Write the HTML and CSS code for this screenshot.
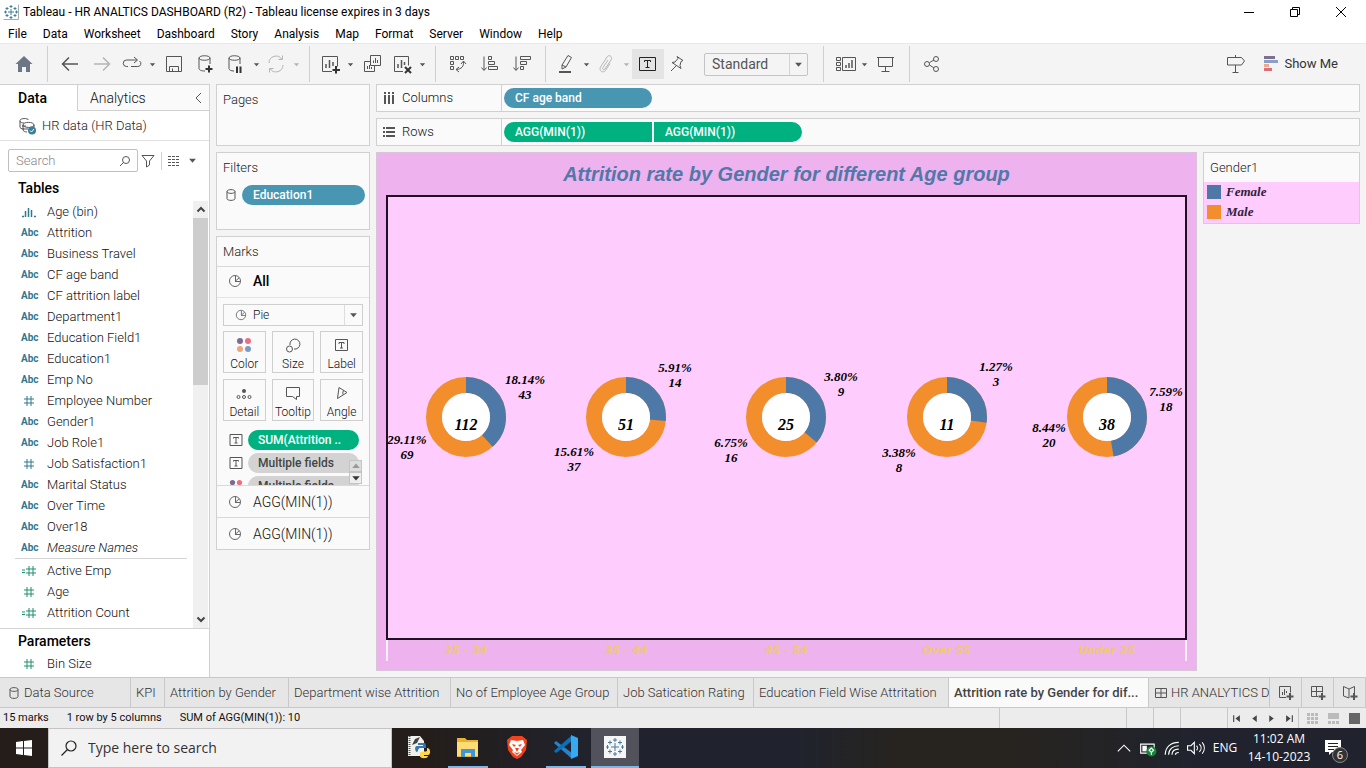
FILE: index.html
```html
<!DOCTYPE html>
<html lang="en">
<head>
<meta charset="utf-8">
<title>Tableau - HR ANALTICS DASHBOARD (R2)</title>
<link rel="stylesheet" href="styles.css">
</head>
<body>
<svg class="defs" aria-hidden="true">
  <symbol id="hash" viewBox="0 0 12 12"><path d="M4 1v10M8 1v10M1 4h10M1 8h10" fill="none" stroke="currentColor"/></symbol>
  <symbol id="calc" viewBox="0 0 16 12"><path d="M8 1v10M12 1v10M5 4h10M5 8h10M1 5h3M1 7.500h3" fill="none" stroke="currentColor"/></symbol>
  <symbol id="bin" viewBox="0 0 16 12"><path d="M4.500 5v6M7.500 2v9M10.500 4v7M1 10.500h2M13 10.500h2" fill="none" stroke="currentColor" stroke-width="1.500"/></symbol>
  <symbol id="pie" viewBox="0 0 14 14"><path d="M7 1.500a5.500 5.500 0 1 0 0 11 5.500 5.500 0 0 0 0-11zM7.500 2v5l3.500-3M7 7.500h5" fill="none" stroke="#666"/></symbol>
  <symbol id="tbox" viewBox="0 0 14 14"><path d="M1 1.500h12v11H1zM4.500 5.500V4.500h5v1M7 4.500v5.500M5.500 10h3" fill="none" stroke="#555"/></symbol>
  <symbol id="caret" viewBox="0 0 8 8"><path d="M1 2.500h6L4 6z" fill="currentColor"/></symbol>
  <symbol id="db" viewBox="0 0 12 14"><path d="M2 3.500v7c0 2.500 8 2.500 8 0v-7M2 3.500c0-2.500 8-2.500 8 0s-8 2.500-8 0z" fill="none" stroke="#555"/></symbol>
  <symbol id="colors" viewBox="0 0 16 16"><circle cx="4" cy="4" r="3" fill="#7b6a91"/><circle cx="12" cy="4" r="3" fill="#ea6f80"/><circle cx="4" cy="12" r="3" fill="#efa47d"/><circle cx="12" cy="12" r="3" fill="#7a9cc0"/></symbol>
</svg>

<header class="titlebar">
  <svg class="app-icon" viewBox="0 0 16 16"><path d="M.5 15.500h15V.5" fill="none" stroke="#aaa"/><path d="M8 5v6M5 8h6M8 1v3M6.500 2.500h3M8 12v3M6.500 13.500h3M1 8h3M2.500 6.500v3M12 8h3M13.500 6.500v3M4 3v3M2.500 4.500h3M12 3v3M10.500 4.500h3M4 10v3M2.500 11.500h3M12 10v3M10.500 11.500h3" stroke="#3d7e9d" fill="none"/></svg>
  <h1>Tableau - HR ANALTICS DASHBOARD (R2) - Tableau license expires in 3 days</h1>
  <button class="win" aria-label="Minimize"><svg viewBox="0 0 12 12"><path d="M1 6.500h10"/></svg></button>
  <button class="win" aria-label="Restore"><svg viewBox="0 0 12 12"><path d="M1.500 3.500h7v7h-7zM3.500 3.500v-2h7v7h-2"/></svg></button>
  <button class="win" aria-label="Close"><svg viewBox="0 0 12 12"><path d="M1 1l10 10M11 1L1 11"/></svg></button>
</header>

<nav class="menubar">
  <button>File</button><button>Data</button><button>Worksheet</button><button>Dashboard</button><button>Story</button><button>Analysis</button><button>Map</button><button>Format</button><button>Server</button><button>Window</button><button>Help</button>
</nav>

<div class="toolbar">
  <button class="tool" aria-label="Start page"><svg viewBox="0 0 20 20"><path d="M10 2L1.500 10H4v8h4v-5h4v5h4v-8h2.500z" fill="#6b7785"/></svg></button>
  <span class="sep"></span>
  <button class="tool" aria-label="Undo"><svg viewBox="0 0 20 20"><path d="M18 10H3M9 3.500L2.500 10 9 16.500" stroke-width="1.500"/></svg></button>
  <button class="tool faint" aria-label="Redo"><svg viewBox="0 0 20 20"><path d="M2 10h15M11 3.500l6.500 6.500-6.500 6.500" stroke-width="1.500"/></svg></button>
  <button class="tool narrow" aria-label="Replay"><svg viewBox="0 0 20 20"><path d="M6 12.500H4.500a3 3 0 0 1 0-6.500H15M12 3l3.500 3L12 9M9 12.500h6.500a3 3 0 0 0 2-5.500"/></svg></button>
  <button class="drop" aria-label="Replay options"><svg><use href="#caret"/></svg></button>
  <button class="tool" aria-label="Save"><svg viewBox="0 0 20 20"><path d="M2.500 2.500h15v15h-15zM5.500 17.500v-5h9v5M8.500 17.500v-3"/></svg></button>
  <button class="tool mid" aria-label="New data source"><svg viewBox="0 0 20 20"><path d="M10 17c-4 0-6-1-6-2.500V4c0-3 11-3 11 0v6M4 4c0 3 11 3 11 0"/><path d="M14 11.500v7M10.500 15h7" stroke="#333" stroke-width="2"/></svg></button>
  <button class="tool mid" aria-label="Pause updates"><svg viewBox="0 0 20 20"><path d="M9 17c-3 0-5-1-5-2.500V4c0-3 11-3 11 0v6M4 4c0 3 11 3 11 0"/><path d="M12 12.500v6.500M15.500 12.500v6.500" stroke="#333" stroke-width="2"/></svg></button>
  <button class="drop" aria-label="Update options"><svg><use href="#caret"/></svg></button>
  <button class="tool narrow faint" aria-label="Refresh"><svg viewBox="0 0 20 20"><path d="M3 9a7 7 0 0 1 13-3.500M17 11a7 7 0 0 1-13 3.500M16.500 1.500v4h-4M3.500 18.500v-4h4"/></svg></button>
  <button class="drop faint" aria-label="Refresh options"><svg><use href="#caret"/></svg></button>
  <span class="sep"></span>
  <button class="tool narrow" aria-label="New worksheet"><svg viewBox="0 0 20 20"><path d="M12 17.500H2.500v-15h15v10"/><path d="M6 14v-4M9.500 14V6M13 12V8" stroke-width="1.500"/><path d="M16 12v7.500M12.500 16h7.500" stroke="#333" stroke-width="2"/></svg></button>
  <button class="drop" aria-label="New options"><svg><use href="#caret"/></svg></button>
  <button class="tool" aria-label="Duplicate"><svg viewBox="0 0 20 20"><path d="M8.500 1.500h10v10h-10zM8 7.500H2.500v10h10V12M11.500 9V6.500M13.500 9V4M15.500 9V6M5.500 15v-3M7.500 15v-4M9.500 15v-2"/></svg></button>
  <button class="tool narrow" aria-label="Clear sheet"><svg viewBox="0 0 20 20"><path d="M11 17.500H2.500v-15h14v9"/><path d="M6 14v-4M9.500 14V6M12.500 11V8" stroke-width="1.500"/><path d="M13 13l6 6M19 13l-6 6" stroke="#333" stroke-width="2"/></svg></button>
  <button class="drop" aria-label="Clear options"><svg><use href="#caret"/></svg></button>
  <span class="sep"></span>
  <button class="tool" aria-label="Swap rows and columns"><svg viewBox="0 0 20 20"><path d="M2.500 2.500h3v3h-3zM7.500 2.500h3v3h-3zM12.500 2.500h3v3h-3zM2.500 7.500h3v3h-3zM2.500 12.500h3v3h-3zM15.500 7.500c.5 5-2 7.500-7 8M13 10l2.500-3 2.500 3M11 13l-3 2.500 3 2.500"/></svg></button>
  <button class="tool" aria-label="Sort ascending"><svg viewBox="0 0 20 20"><path d="M4 2.500V16M1.500 13.500L4 16.500l2.500-3M8.500 2.500h3v3h-3zM8.500 7.500h6v3h-6zM8.500 12.500h9v3h-9z"/></svg></button>
  <button class="tool" aria-label="Sort descending"><svg viewBox="0 0 20 20"><path d="M4 2.500V16M1.500 13.500L4 16.500l2.500-3M8.500 2.500h10v3h-10zM8.500 7.500h6v3h-6zM8.500 12.500h3v3h-3z"/></svg></button>
  <span class="sep"></span>
  <button class="tool narrow" aria-label="Highlight"><svg viewBox="0 0 20 20"><path d="M6 11l6-9.500 3.500 2L10 13l-4 2zM6 11l4 2"/><path d="M3 18h12" stroke-width="2"/></svg></button>
  <button class="drop" aria-label="Highlight options"><svg><use href="#caret"/></svg></button>
  <button class="tool narrow faint" aria-label="Group"><svg viewBox="0 0 20 20"><path d="M12 6l-5 7.500c-1 2 1 3 2 1.500l6-9c2-3.500-2-6-4-3l-6.500 10c-2 4 3 6.500 5 3.500l4.500-7"/></svg></button>
  <button class="drop faint" aria-label="Group options"><svg><use href="#caret"/></svg></button>
  <button class="tool pressed" aria-label="Show mark labels"><svg viewBox="0 0 20 20"><path d="M1.500 3.500h16v13h-16zM6.500 8V6.500h6V8M9.500 6.500V13M7.500 13.500h4"/></svg></button>
  <button class="tool narrow" aria-label="Fix axes"><svg viewBox="0 0 20 20"><path d="M9 2.500l6 4-2 1-1 4 1 3-9-6 3-.5 3-3.500zM8 12l-5 5"/></svg></button>
  <span class="fit"><select aria-label="Fit"><option>Standard</option></select><svg><use href="#caret"/></svg></span>
  <span class="sep"></span>
  <button class="tool narrow cardbtn" aria-label="Show cards"><svg viewBox="0 0 20 20"><path d="M.5 3.500h4v3h-4zM.5 8.500h4v3h-4zM.5 13.500h4v3h-4zM6.500 3.500h13v13h-13z"/><path d="M10 14v-3M13 14V9M16 14V6" stroke-width="1.500"/></svg></button>
  <button class="drop" aria-label="Card options"><svg><use href="#caret"/></svg></button>
  <button class="tool" aria-label="Presentation mode"><svg viewBox="0 0 20 20"><path d="M1 3.500h17M2.500 3.500v9h14v-9M9.500 12.500v5M5.500 17.500h8"/></svg></button>
  <span class="sep"></span>
  <button class="tool" aria-label="Share"><svg viewBox="0 0 20 20"><path d="M7.500 8.500L12 6M7.500 11l4.500 3"/><circle cx="5" cy="10" r="2.500"/><circle cx="14" cy="5" r="2.500"/><circle cx="14" cy="15" r="2.500"/></svg></button>
  <button class="tool guide" aria-label="Guide"><svg viewBox="0 0 20 20"><path d="M9.500 1v2M9.500 11v7M6.500 18.500h6M1.500 3.500h14l3 3.500-3 4h-14z"/></svg></button>
  <button class="showme"><svg viewBox="0 0 16 16"><path d="M0 0h11v3H0z" fill="#806f95"/><path d="M0 4h14v3H0z" fill="#86a1c5"/><path d="M0 8h5v3H0z" fill="#f0a98c"/><path d="M0 12h8v3H0z" fill="#dd6d7b"/></svg>Show Me</button>
</div>

<main class="workspace">
  <aside class="data-pane">
    <div class="pane-tabs"><button class="on">Data</button><button class="off">Analytics</button><button class="collapse" aria-label="Collapse"><svg viewBox="0 0 10 12"><path d="M7 1L2 6l5 5" fill="none" stroke="#555"/></svg></button></div>
    <a class="source" href="#"><svg viewBox="0 0 18 18"><path d="M5 12c-3 0-4-1-4-2V3.500C1 1 9 1 9.500 3M1 4c0 1.500 2 2 4 2M4 8c0-3.500 11-3.500 11 0s-11 3-11 0v5c0 1 2 2 4 2M15 8v2M3 9h4M4 12h5" fill="none" stroke="#555"/><circle cx="13" cy="13.500" r="4" fill="#387f9e"/><path d="M11 13.500l1.500 1.500 2.500-3" fill="none" stroke="#fff"/></svg>HR data (HR Data)</a>
    <div class="search-row">
      <label class="search"><input type="text" placeholder="Search" aria-label="Search fields"><svg viewBox="0 0 12 12"><circle cx="7" cy="5" r="3.500" fill="none" stroke="#555"/><path d="M4.500 7.500L1 11" stroke="#555"/></svg></label>
      <button class="filter" aria-label="Filter fields"><svg viewBox="0 0 14 14"><path d="M1 1.500h12L8.500 7v4l-3 2V7z" fill="none" stroke="#555"/></svg></button>
      <button class="viewas" aria-label="View as"><svg viewBox="0 0 12 12"><path d="M0 1.500h12M0 4.500h12M0 7.500h12M0 10.500h12" stroke="#555" stroke-dasharray="3 1"/></svg><svg class="car"><use href="#caret"/></svg></button>
    </div>
    <h2>Tables</h2>
    <div class="fields-wrap">
      <div class="fields">
        <ul>
          <li><svg><use href="#bin"/></svg>Age (bin)</li>
          <li><b>Abc</b>Attrition</li>
          <li><b>Abc</b>Business Travel</li>
          <li><b>Abc</b>CF age band</li>
          <li><b>Abc</b>CF attrition label</li>
          <li><b>Abc</b>Department1</li>
          <li><b>Abc</b>Education Field1</li>
          <li><b>Abc</b>Education1</li>
          <li><b>Abc</b>Emp No</li>
          <li><svg><use href="#hash"/></svg>Employee Number</li>
          <li><b>Abc</b>Gender1</li>
          <li><b>Abc</b>Job Role1</li>
          <li><svg><use href="#hash"/></svg>Job Satisfaction1</li>
          <li><b>Abc</b>Marital Status</li>
          <li><b>Abc</b>Over Time</li>
          <li><b>Abc</b>Over18</li>
          <li><b>Abc</b><i>Measure Names</i></li>
        </ul>
        <ul class="measures">
          <li><svg><use href="#calc"/></svg>Active Emp</li>
          <li><svg><use href="#hash"/></svg>Age</li>
          <li><svg><use href="#calc"/></svg>Attrition Count</li>
        </ul>
      </div>
      <div class="scroll"><svg viewBox="0 0 10 10"><path d="M1.500 7L5 3.500 8.500 7"/></svg><span class="thumb"></span><svg viewBox="0 0 10 10"><path d="M1.500 3L5 6.500 8.500 3"/></svg></div>
    </div>
    <section class="params"><h2>Parameters</h2><ul class="measures"><li><svg><use href="#hash"/></svg>Bin Size</li></ul></section>
  </aside>

  <div class="cards">
    <section class="card pages"><h3>Pages</h3></section>
    <section class="card filters"><h3>Filters</h3><div class="pill-row"><svg><use href="#db"/></svg><button class="pill blue">Education1</button></div></section>
    <section class="card marks">
      <h3>Marks</h3>
      <button class="layer current"><svg><use href="#pie"/></svg>All</button>
      <div class="mark-type"><svg><use href="#pie"/></svg><select aria-label="Mark type"><option>Pie</option></select><svg class="arrow"><use href="#caret"/></svg></div>
      <div class="mark-grid">
        <button><svg viewBox="0 0 16 16"><use href="#colors"/></svg>Color</button>
        <button><svg viewBox="0 0 16 16"><path d="M5 8a5 5 0 1 1 4 4"/><circle cx="4.500" cy="12" r="3"/></svg>Size</button>
        <button><svg viewBox="0 0 16 16"><path d="M1.500 2.500h12v11h-12zM5 7V5.500h5V7M7.500 5.500v5.500M6 11h3"/></svg>Label</button>
        <button><svg viewBox="0 0 16 16"><circle cx="8" cy="6" r="2" fill="#555" stroke="none"/><circle cx="2.500" cy="12" r="1.500"/><circle cx="8" cy="12" r="1.500"/><circle cx="13.500" cy="12" r="1.500"/></svg>Detail</button>
        <button><svg viewBox="0 0 16 16"><path d="M1.500 2.500h13v9h-3v3l-4-3h-6z"/></svg>Tooltip</button>
        <button><svg viewBox="0 0 16 16"><path d="M5 2.500l8 5M5 2.500l-1.500 11 9.500-6M9 9.500c-.5-2 0-3.500 1-4"/></svg>Angle</button>
      </div>
      <div class="encodings">
        <div class="pill-row"><svg><use href="#tbox"/></svg><button class="pill green">SUM(Attrition ..</button></div>
        <div class="pill-row"><svg><use href="#tbox"/></svg><button class="pill grey">Multiple fields</button></div>
        <div class="pill-row"><svg><use href="#colors"/></svg><button class="pill grey">Multiple fields</button></div>
        <div class="spin"><button aria-label="Scroll up"><svg class="up"><use href="#caret"/></svg></button><button aria-label="Scroll down"><svg><use href="#caret"/></svg></button></div>
      </div>
      <button class="layer"><svg><use href="#pie"/></svg>AGG(MIN(1))</button>
      <button class="layer"><svg><use href="#pie"/></svg>AGG(MIN(1))</button>
    </section>
  </div>

  <div class="stage">
    <div class="shelf"><h3><svg viewBox="0 0 12 12"><path d="M2 0v2M2 3v9M6 0v2M6 3v9M10 0v2M10 3v9" stroke="#555" stroke-width="2"/></svg>Columns</h3><button class="pill blue">CF age band</button></div>
    <div class="shelf"><h3><svg viewBox="0 0 12 12"><path d="M0 2h2M3 2h9M0 6h2M3 6h9M0 10h2M3 10h9" stroke="#555" stroke-width="2"/></svg>Rows</h3><button class="pill green left">AGG(MIN(1))</button><button class="pill green right">AGG(MIN(1))</button></div>
    <div class="view-row">
      <section class="view">
        <h2>Attrition rate by Gender for different Age group</h2>
        <div class="plot">
          <svg viewBox="-80 -80 160 160"><circle class="m" r="32"/><circle class="f" r="32" pathLength="112" stroke-dasharray="43 112"/><circle class="hole" r="24"/><text class="total" y="13">112</text><text x="59" y="-33">18.14%</text><text x="59" y="-18">43</text><text x="-59" y="27">29.11%</text><text x="-59" y="42">69</text></svg>
          <svg viewBox="-80 -80 160 160"><circle class="m" r="32"/><circle class="f" r="32" pathLength="51" stroke-dasharray="13.600 51"/><circle class="hole" r="24"/><text class="total" y="13">51</text><text x="49" y="-45">5.91%</text><text x="49" y="-30">14</text><text x="-52" y="39">15.61%</text><text x="-52" y="54">37</text></svg>
          <svg viewBox="-80 -80 160 160"><circle class="m" r="32"/><circle class="f" r="32" pathLength="25" stroke-dasharray="9 25"/><circle class="hole" r="24"/><text class="total" y="13">25</text><text x="55" y="-36">3.80%</text><text x="55" y="-21">9</text><text x="-55" y="30">6.75%</text><text x="-55" y="45">16</text></svg>
          <svg viewBox="-80 -80 160 160"><circle class="m" r="32"/><circle class="f" r="32" pathLength="11" stroke-dasharray="3 11"/><circle class="hole" r="24"/><text class="total" y="13">11</text><text x="49" y="-46">1.27%</text><text x="49" y="-31">3</text><text x="-48" y="40">3.38%</text><text x="-48" y="55">8</text></svg>
          <svg viewBox="-80 -80 160 160"><circle class="m" r="32"/><circle class="f" r="32" pathLength="38" stroke-dasharray="18 38"/><circle class="hole" r="24"/><text class="total" y="13">38</text><text x="59" y="-21">7.59%</text><text x="59" y="-6">18</text><text x="-58" y="15">8.44%</text><text x="-58" y="30">20</text></svg>
        </div>
        <div class="axis"><span>25 - 34</span><span>35 - 44</span><span>45 - 54</span><span>Over 55</span><span>Under 25</span></div>
      </section>
      <aside class="legend"><h3>Gender1</h3><ul><li><span class="swatch female"></span>Female</li><li><span class="swatch male"></span>Male</li></ul></aside>
    </div>
  </div>
</main>

<nav class="sheets">
  <button class="ds"><svg><use href="#db"/></svg>Data Source</button>
  <button class="s-kpi">KPI</button>
  <button class="s-gender">Attrition by Gender</button>
  <button class="s-dept">Department wise Attrition</button>
  <button class="s-age">No of Employee Age Group</button>
  <button class="s-job">Job Satication Rating</button>
  <button class="s-edu">Education Field Wise Attritation</button>
  <button class="s-active">Attrition rate by Gender for dif...</button>
  <button class="s-dash"><svg viewBox="0 0 12 12"><path d="M.5 1.500h11v9H.5zM6 1.500v9M.5 6h11" fill="none" stroke="#555"/></svg>HR ANALYTICS D</button>
  <button class="add" aria-label="New worksheet"><svg viewBox="0 0 16 16"><path d="M8 12.500H1.500v-11h11v6M4.500 10V7M6.500 10V4M8.500 8V6"/><path d="M12 8v7M8.500 11.500h7" stroke-width="2"/></svg></button>
  <button class="add" aria-label="New dashboard"><svg viewBox="0 0 16 16"><path d="M8 11.500H1.500v-10h11v6M6.500 1.500v10M1.500 6.500h11"/><path d="M12 8v7M8.500 11.500h7" stroke-width="2"/></svg></button>
  <button class="add" aria-label="New story"><svg viewBox="0 0 16 16"><path d="M7 13l-5.500-2V1.500L7 4l5.500-2.500V8M7 4v9"/><path d="M12 8v7M8.500 11.500h7" stroke-width="2"/></svg></button>
</nav>

<div class="status">
  <span>15 marks</span><span>1 row by 5 columns</span><span>SUM of AGG(MIN(1)): 10</span>
  <div class="cell c1"></div><div class="cell c2"></div><div class="cell c2"></div><div class="cell c3"></div>
  <div class="cell pager"><button aria-label="First"><svg viewBox="0 0 8 8"><path d="M1 1h1v6H1zM7 1v6L3 4z"/></svg></button><button aria-label="Previous"><svg viewBox="0 0 8 8"><path d="M6 1v6L2 4z"/></svg></button><button aria-label="Next"><svg viewBox="0 0 8 8"><path d="M2 1v6l4-3z"/></svg></button><button aria-label="Last"><svg viewBox="0 0 8 8"><path d="M6 1h1v6H6zM1 1v6l4-3z"/></svg></button></div>
  <div class="cell modes"><button aria-label="Tabs"><svg viewBox="0 0 11 11"><path d="M0 0h3v3H0zM4 0h3v3H4zM8 0h3v3H8zM0 4h3v3H0zM4 4h3v3H4zM8 4h3v3H8zM0 8h3v3H0zM4 8h3v3H4zM8 8h3v3H8z" fill="#bbb"/></svg></button><button aria-label="Filmstrip"><svg viewBox="0 0 11 11"><path d="M0 0h11v6H0zM0 8h3v3H0zM4 8h3v3H4zM8 8h3v3H8z" fill="#bbb"/></svg></button><button aria-label="Sheet"><svg viewBox="0 0 11 11"><path d="M0 0h11v11H0z" fill="#666"/></svg></button></div>
</div>

<footer class="taskbar">
  <button class="start" aria-label="Start"><svg viewBox="0 0 16 16"><path d="M0 2l7-1v6.500H0zM8 1l8-1v7.500H8zM0 8.500h7V15l-7-1zM8 8.500h8V16l-8-1z" fill="#fff"/></svg></button>
  <label class="tsearch"><svg viewBox="0 0 16 16"><circle cx="10" cy="6" r="5" fill="none" stroke="#222" stroke-width="1.200"/><path d="M6.500 9.500L.5 15.500" stroke="#222" stroke-width="1.200"/></svg><input type="text" placeholder="Type here to search" aria-label="Type here to search"></label>
  <div class="apps">
    <button aria-label="Python"><svg viewBox="0 0 24 24"><path d="M1 1h12l4 5v15H1z" fill="#f1f1ee"/><path d="M2.500 1v20" stroke="#555" stroke-width="2" stroke-dasharray="1 1"/><path d="M5 10l3-6 5-2-3 6z" fill="#444"/><path d="M11 8h6c2 0 2 2 2 5h-6c-2 0-2 4-3 4-2 0-3-6 0-6h6v-1h-5z" fill="#3876ab"/><path d="M20 13c4 0 4 7 1 7h-4v1h4c0 3-8 3-8 0v-3c0-2 6-1 7-2z" fill="#ffd94b"/></svg></button>
    <button class="running" aria-label="File Explorer"><svg viewBox="0 0 24 24"><path d="M1 3h8l2 2h11v17H1z" fill="#e7b22e"/><path d="M1 7h21v14H1z" fill="#ffdc73"/><path d="M5 14h14v8h-4v-4H9v4H5z" fill="#3f98d4"/></svg></button>
    <button aria-label="Brave"><svg viewBox="0 0 24 24"><path d="M7 1h10l5 4-1 10-5 7-4 2-4-2-5-7L2 5z" fill="#f4431c"/><path d="M6 5l6 1 6-1 2 5-4 5 1 2-5 4-5-4 1-2-4-5z" fill="#fff"/><path d="M7 9l4 1-2 2zM17 9l-4 1 2 2zM10 13h4l-2 4zM9 17l3 1 3-1-3 3z" fill="#f4431c"/></svg></button>
    <button class="running" aria-label="Visual Studio Code"><svg viewBox="0 0 24 24"><path d="M0 8l2-2 16 12-1 5z" fill="#2584d0"/><path d="M0 16l2 2L18 6l-1-5z" fill="#0a70b8"/><path d="M17 0l7 3v18l-7 3z" fill="#35aaf2"/></svg></button>
    <button class="running active" aria-label="Tableau"><svg viewBox="0 0 24 24"><path d="M1 1h22v22H1z" fill="#f6f6f6"/><path d="M12 8v8M8 12h8M12 3v4M10 5h4M12 17v4M10 19h4M3 12h3M4.500 10v4M18 12h3M19.500 10v4M7 5.500v4M5 7.500h4M17 5.500v4M15 7.500h4M7 14.500v4M5 16.500h4M17 14.500v4M15 16.500h4" stroke="#467b9a" fill="none"/></svg></button>
  </div>
  <div class="tray">
    <button aria-label="Hidden icons"><svg viewBox="0 0 16 16"><path d="M2.500 11L8 5.500l5.500 5.500"/></svg></button>
    <button aria-label="Battery"><svg viewBox="0 0 16 16"><path d="M1.500 4.500h12v8h-12z"/><path d="M3 6h4v5H3z" fill="#fff" stroke="none"/><circle cx="11" cy="11" r="4.500" fill="#16853c" stroke="none"/><path d="M11 14v-3M9 10l2-2 2 2-2 2z"/></svg></button>
    <button aria-label="Wi-Fi"><svg viewBox="0 0 16 16"><path d="M2 14C2 7 7 3 14 3M5 14c0-5 4-8 9-8M8 14c0-3 2-5 6-5M11 14c0-1 1-2 3-2"/></svg></button>
    <button aria-label="Volume"><svg viewBox="0 0 16 16"><path d="M.5 6h3l3-3v10l-3-3h-3zM8.500 6c1 1 1 3 0 4M11 4.500c2 2 2 5 0 7M13.500 3c2.500 3 2.500 7 0 10"/></svg></button>
    <button class="lang">ENG</button>
    <button class="clock"><span>11:02 AM</span><span>14-10-2023</span></button>
    <button class="notes" aria-label="Notifications, 6 new"><svg viewBox="0 0 16 16"><path d="M0 0h16v12H7l-3 3v-3H0z" fill="#fff"/><path d="M3 3.500h10M3 6.500h10M3 9.500h6" stroke="#222"/></svg><span class="badge">6</span></button>
  </div>
</footer>
</body>
</html>
```
FILE: styles.css
```css
* { box-sizing: border-box; }
body { margin: 0; height: 100vh; display: flex; flex-direction: column; overflow: hidden; background: #f4f4f4; color: #111; font: 300 13px/20px Roboto, "Liberation Sans", sans-serif; }
button, input, select { font: inherit; color: inherit; margin: 0; padding: 0; border: 0; background: none; appearance: none; outline: none; white-space: nowrap; }
button { display: flex; align-items: center; justify-content: center; }
h1, h2, h3, ul { margin: 0; padding: 0; font-size: inherit; font-weight: inherit; list-style: none; white-space: nowrap; }
svg { display: block; flex: none; }
.defs { width: 0; height: 0; position: absolute; }

/* window chrome */
.titlebar { display: flex; align-items: center; height: 24px; flex: none; background: #fff; padding: 0 2px 0 3px; }
.app-icon { width: 16px; height: 16px; }
.titlebar h1 { flex: 1; padding-left: 4px; color: #000; font: 12px/16px Roboto, sans-serif; }
.win { width: 46px; height: 22px; }
.win svg { width: 12px; height: 12px; fill: none; stroke: #000; }
.menubar { display: flex; height: 19px; flex: none; background: #fff; color: #000; font: 12px/18px Roboto, sans-serif; padding-left: 8px; gap: 16px; }

/* toolbar */
.toolbar { display: flex; align-items: center; height: 41px; flex: none; padding-left: 8px; border-top: 1px solid #e8e8e8; color: #555; }
.tool { width: 32px; height: 30px; flex: none; }
.tool.mid { width: 30px; }
.tool.narrow { width: 28px; }
.cardbtn { padding-left: 4px; }
.tool svg { width: 20px; height: 20px; fill: none; stroke: currentColor; }
.tool svg [fill] { stroke: none; }
.faint { color: #b5b5b5; }
.drop { width: 12px; height: 30px; flex: none; }
.drop svg { width: 7px; height: 7px; }
.sep { width: 1px; height: 36px; margin: 0 6px 0 7px; background: #d0d0d0; flex: none; }
.pressed { background: #e4e4e4; color: #222; }
.fit { display: flex; align-items: center; width: 104px; height: 23px; margin: 0 8px 0 12px; border: 1px solid #c4c4c4; border-radius: 2px; position: relative; }
.fit select { width: 100%; height: 21px; padding-left: 7px; font-size: 14px; font-weight: 400; }
.fit svg { position: absolute; right: 0; width: 18px; height: 21px; padding: 0 4px; border-left: 1px solid #d4d4d4; pointer-events: none; }
.guide { margin-left: auto; }
.showme { gap: 4px; margin: 0 28px 0 12px; color: #333; font-size: 13px; font-weight: 400; }
.showme svg { width: 16px; height: 16px; }

/* data pane */
.workspace { display: flex; flex: 1; min-height: 0; }
.data-pane { display: flex; flex-direction: column; width: 210px; flex: none; background: #fff; border-right: 1px solid #d0d0d0; border-top: 1px solid #d0d0d0; }
.pane-tabs { display: flex; height: 26px; flex: none; font-size: 14px; }
.pane-tabs .on { width: 77px; padding-right: 12px; font-weight: 500; color: #000; }
.pane-tabs .off { flex: 1; justify-content: flex-start; padding-left: 12px; background: #fafafa; border-left: 1px solid #d0d0d0; border-bottom: 1px solid #d0d0d0; }
.pane-tabs .collapse { width: 21px; background: #fafafa; border-bottom: 1px solid #d0d0d0; }
.collapse svg { width: 10px; height: 12px; }
.source { display: flex; align-items: center; gap: 5px; height: 30px; padding-left: 19px; color: #222; text-decoration: none; border-bottom: 1px solid #e0e0e0; }
.source svg { width: 18px; height: 18px; }
.search-row { display: flex; align-items: center; padding: 8px 12px 4px 8px; }
.search { display: flex; align-items: center; width: 130px; height: 23px; padding: 0 6px 0 7px; border: 1px solid #c0c0c0; border-radius: 2px; }
.search input { flex: 1; min-width: 0; }
.search input::placeholder { color: #888; opacity: 1; }
.search svg { width: 12px; height: 12px; }
.filter { width: 24px; height: 18px; padding-right: 3px; border-right: 1px solid #d0d0d0; }
.filter svg { width: 14px; height: 14px; }
.viewas { gap: 8px; padding-left: 6px; color: #555; }
.viewas svg { width: 12px; height: 12px; }
.viewas .car { width: 9px; height: 9px; }
.data-pane h2 { padding-left: 18px; color: #000; font-weight: 500; font-size: 14px; line-height: 24px; }
.fields-wrap { display: flex; flex: 1; min-height: 0; padding-top: 1px; }
.fields { flex: 1; overflow: hidden; }
.data-pane li { display: flex; align-items: center; height: 21px; padding-left: 21px; line-height: 21px; }
.data-pane li b { width: 26px; color: #2f7890; font-size: 10px; font-weight: 700; }
.data-pane li svg { width: 16px; height: 12px; margin-right: 10px; color: #2f7890; }
.data-pane .measures li svg { color: #1e8f6c; }
.fields .measures { border-top: 1px solid #d4d4d4; margin: 0 6px 0 15px; padding-top: 1px; }
.fields .measures li { padding-left: 6px; }
.scroll { display: flex; flex-direction: column; align-items: center; justify-content: flex-start; width: 15px; margin-right: 1px; background: #f0f0f0; }
.scroll svg { width: 10px; height: 17px; fill: none; stroke: #444; stroke-width: 2; }
.thumb { width: 15px; height: 167px; margin-bottom: auto; background: #cdcdcd; }
.params { height: 49px; flex: none; border-top: 1px solid #d4d4d4; }

/* shelves and cards */
.cards { display: flex; flex-direction: column; gap: 6px; width: 154px; margin-left: 6px; flex: none; }
.card { border: 1px solid #d0d0d0; background: #fafafa; }
.card h3 { line-height: 29px; padding-left: 6px; color: #222; }
.pages { height: 62px; }
.filters { height: 78px; }
.pill-row { display: flex; align-items: center; padding-left: 8px; }
.pill-row svg { width: 12px; height: 14px; margin-right: 5px; }
.pill { height: 20px; justify-content: flex-start; padding-left: 11px; border-radius: 10px; color: #fff; font-weight: 500; font-size: 12px; }
.pill-row .pill { flex: 1; margin-right: 4px; }
.blue { background: #4996b2; }
.green { background: #00b180; }
.grey { background: #d3d3d3; color: #444; }
.filters .pill-row { padding-top: 3px; }
.layer { display: flex; justify-content: flex-start; gap: 11px; width: 100%; height: 32px; padding-left: 11px; border-top: 1px solid #d9d9d9; font-size: 14px; }
.layer svg { width: 14px; height: 14px; }
.layer.current { color: #000; font-weight: 500; padding-bottom: 2px; border-bottom: 1px solid #e4e4e4; }
.mark-type { display: flex; align-items: center; height: 22px; margin: 6px 6px 5px; padding-left: 11px; border: 1px solid #cfcfcf; position: relative; font-size: 12px; }
.mark-type svg { width: 12px; height: 12px; margin-right: 6px; }
.mark-type select { flex: 1; height: 20px; }
.mark-type .arrow { position: absolute; right: 0; width: 18px; height: 20px; margin: 0; padding: 0 4px; border-left: 1px solid #ddd; pointer-events: none; color: #555; }
.mark-grid { display: grid; grid-template-columns: repeat(3, 1fr); gap: 6px; padding: 0 6px; }
.mark-grid button { flex-direction: column; height: 42px; border: 1px solid #cfcfcf; font-size: 12px; line-height: 16px; justify-content: flex-end; gap: 3px; }
.mark-grid svg { width: 16px; height: 16px; fill: none; stroke: #555; }
.mark-grid [href="#colors"] { stroke: none; }
.encodings { display: flex; flex-direction: column; gap: 3px; height: 64px; padding-top: 9px; overflow: hidden; position: relative; }
.encodings .pill-row { padding-left: 12px; flex: none; }
.encodings .pill-row svg { width: 14px; height: 14px; }
.encodings .pill-row .pill { margin-right: 10px; padding-left: 10px; }
.spin { position: absolute; right: 7px; bottom: 1px; }
.spin button { width: 13px; height: 12px; background: #eee; border: 1px solid #c4c4c4; color: #333; }
.spin button:first-child { background: #ddd; color: #999; }
.spin svg { width: 10px; height: 10px; }
.up { transform: rotate(180deg); }

.stage { display: flex; flex-direction: column; gap: 6px; flex: 1; min-width: 0; padding: 0 6px 6px; }
.shelf { display: flex; align-items: center; height: 28px; flex: none; border: 1px solid #d0d0d0; background: #fafafa; }
.shelf h3 { display: flex; align-items: center; gap: 7px; width: 125px; height: 26px; padding-left: 6px; margin-right: 2px; border-right: 1px solid #d0d0d0; }
.shelf svg { width: 12px; height: 12px; }
.shelf .pill { width: 148px; }
.shelf .left { border-radius: 10px 0 0 10px; margin-right: 2px; }
.shelf .right { border-radius: 0 10px 10px 0; }
.view-row { display: flex; align-items: flex-start; gap: 6px; flex: 1; min-height: 0; }
.view { display: flex; flex-direction: column; flex: 1; min-width: 0; align-self: stretch; padding: 0 9px 9px; background: #eeb2ee; border: 1px solid #d6c6d8; }
.view h2 { text-align: center; color: #5078a8; font: italic bold 20px/42px "Liberation Sans", sans-serif; }
.plot { display: grid; grid-template-columns: repeat(5, minmax(0, 1fr)); align-items: center; flex: 1; padding-bottom: 2px; background: #fecdfe; box-shadow: inset 0 0 0 2px #1e1220; }
.plot svg { width: 160px; height: 160px; overflow: visible; justify-self: center; }
.plot circle { fill: none; stroke-width: 16; transform: rotate(-90deg); }
.m { stroke: #f28e2b; }
.f { stroke: #4e79a7; }
.plot .hole { fill: #fff; }
.plot text { text-anchor: middle; fill: #000; font: italic bold 13px "Liberation Serif", serif; }
.plot .total { font-size: 16px; }
.axis { display: grid; grid-template-columns: repeat(5, 1fr); height: 21px; flex: none; box-shadow: inset 2px 0 #fbf1fb, inset -2px 0 #fbf1fb; color: #eccb6c; text-align: center; font: italic bold 11px/22px "DejaVu Sans", sans-serif; }
.legend { width: 157px; flex: none; border: 1px solid #d0d0d0; background: #fafafa; }
.legend h3 { padding-left: 6px; line-height: 29px; color: #222; }
.legend ul { padding-bottom: 1px; background: #fecdfe; }
.legend li { display: flex; align-items: center; gap: 5px; height: 20px; padding-left: 3px; font: italic bold 13px/20px "Liberation Serif", serif; color: #33203a; }
.swatch { width: 14px; height: 14px; }
.female { background: #4e79a7; }
.male { background: #f28e2b; }

/* sheet tabs */
.sheets { display: flex; height: 31px; flex: none; border-top: 1px solid #c8c8c8; border-bottom: 1px solid #c8c8c8; background: #e6e6e6; color: #333; }
.sheets button { flex: none; justify-content: flex-start; padding-left: 5px; border-right: 1px solid #c8c8c8; overflow: hidden; }
.sheets .ds { width: 131px; gap: 4px; padding-left: 8px; }
.sheets svg { width: 12px; height: 14px; }
.s-kpi { width: 34px; }
.s-gender { width: 124px; }
.s-dept { width: 162px; }
.s-age { width: 167px; }
.s-job { width: 136px; }
.s-edu { width: 195px; }
.sheets .s-active { width: 200px; background: #fafafa; color: #444; font-weight: 500; }
.sheets .s-dash { flex: 1; min-width: 0; gap: 4px; padding-left: 6px; }
.sheets .add { width: 32px; justify-content: center; padding: 0; }
.sheets .add svg { width: 16px; height: 16px; fill: none; stroke: #555; }

.status { display: flex; align-items: center; height: 20px; flex: none; padding-left: 3px; background: #ececec; font-size: 11px; font-weight: 400; }
.status > span { margin-right: 18px; }
.cell { height: 20px; border-left: 1px solid #c8c8c8; }
.c1 { width: 127px; margin-left: auto; }
.c2 { width: 27px; }
.c3 { width: 47px; }
.pager { display: flex; justify-content: space-around; width: 71px; color: #444; }
.pager svg { width: 9px; height: 9px; fill: currentColor; }
.modes { display: flex; justify-content: space-between; width: 68px; padding: 0 6px 0 8px; }
.modes svg { width: 11px; height: 11px; }

/* taskbar */
.taskbar { display: flex; height: 40px; flex: none; color: #fff; background: linear-gradient(90deg, #241d1a 0 31%, #20232e 44% 58%, #27231f 66% 74%, #20232e 88%); font-family: "Open Sans", sans-serif; font-weight: 400; }
.start { width: 48px; }
.start svg { width: 16px; height: 16px; }
.tsearch { display: flex; align-items: center; gap: 11px; width: 344px; padding-left: 12px; background: #f2f2f2; border: 1px solid #c4c4c4; color: #333; }
.tsearch svg { width: 16px; height: 16px; }
.tsearch input { flex: 1; font-size: 14px; }
.tsearch input::placeholder { color: #333; opacity: 1; }
.apps { display: flex; gap: 1px; margin-left: 3px; }
.apps button { width: 48px; height: 40px; border-bottom: 2px solid transparent; }
.apps svg { width: 24px; height: 24px; }
.apps .running { background: linear-gradient(#76b9ed, #76b9ed) bottom / 40px 2px no-repeat border-box; }
.apps .active { background: #52525c; border-bottom-color: #76b9ed; }
.tray { display: flex; align-items: center; margin-left: auto; padding-right: 16px; }
.tray button { width: 24px; height: 40px; }
.tray svg { width: 18px; height: 18px; fill: none; stroke: #fff; }
.tray .lang { width: 34px; font-size: 12px; }
.tray .clock { width: 74px; flex-direction: column; font-size: 12px; line-height: 18px; }
.tray .notes { width: 34px; position: relative; }
.tray .notes svg { width: 16px; height: 16px; stroke: none; }
.tray .notes svg path + path { stroke: #222; }
.badge { position: absolute; left: 16px; top: 19px; width: 16px; height: 16px; border: 1px solid #888; border-radius: 50%; background: #333; font-size: 11px; line-height: 14px; text-align: center; }
```
